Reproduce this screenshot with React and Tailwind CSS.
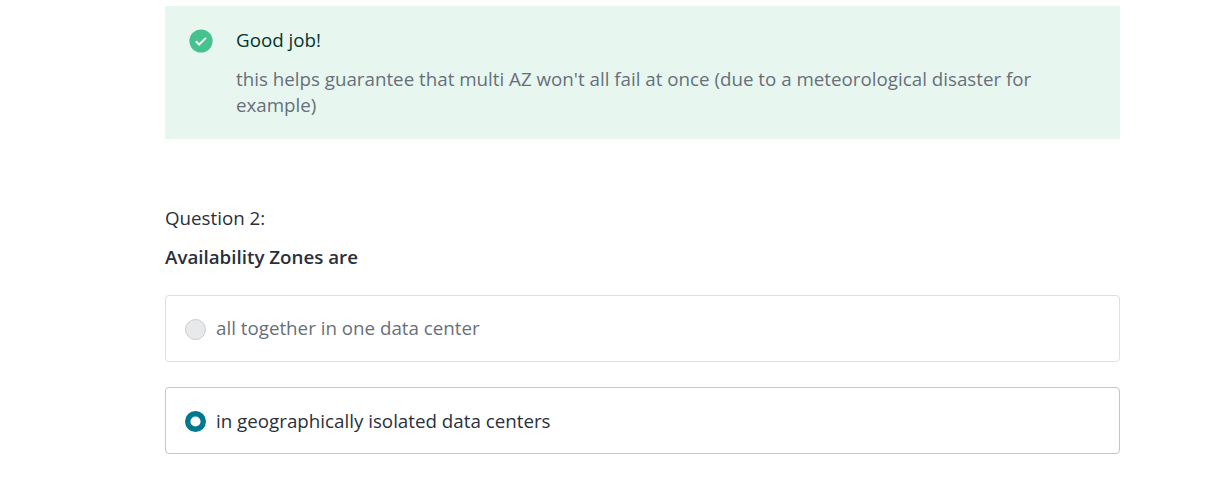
export default function App() {
  return (
    <main className="h-[491px] w-[1219px] overflow-hidden bg-white pt-[6px] pl-[165px] font-['Open_Sans',sans-serif] text-[18.75px] leading-[26px] text-[#29303b]">
      <section className="flex h-[133px] w-[955px] bg-[#e7f7f0] pt-[21px] pl-[24px]">
        <svg className="mt-[2px] h-6 w-6 shrink-0" viewBox="0 0 24 24" fill="none">
          <circle cx="12" cy="12" r="11.6" fill="#46c28e" />
          <path d="m6.8 12.2 3.4 3.3 6.8-6.6" stroke="#f2fbf7" strokeWidth="2" />
        </svg>
        <div className="ml-[23px] w-[830px]">
          <h2 className="text-[#06352a]">Good job!</h2>
          <p className="mt-[13px] text-[#686f7a]">this helps guarantee that multi AZ won't all fail at once (due to a meteorological disaster for example)</p>
        </div>
      </section>
      <p className="mt-[66px]">Question 2:</p>
      <h3 className="mt-[13px] font-semibold">Availability Zones are</h3>
      <div className="mt-[25px] flex h-[67px] w-[955px] items-center rounded-[4px] border border-[#dedfe0] pl-[19px] text-[#686f7a]">
        <span className="mt-[2px] mr-[10px] h-[21px] w-[21px] rounded-full border border-[#cacbcc] bg-[#e8e9eb]" />
        <span className="-mt-px">all together in one data center</span>
      </div>
      <div className="mt-[25px] flex h-[67px] w-[955px] items-center rounded-[4px] border border-[#c5c6c8] pl-[19px]">
        <svg className="mt-[2px] mr-[10px] h-[21px] w-[21px]" viewBox="0 0 21 21" fill="none">
          <circle cx="10.5" cy="10.5" r="7.8" stroke="#007791" strokeWidth="5.4" />
        </svg>
        <span>in geographically isolated data centers</span>
      </div>
    </main>
  );
}
